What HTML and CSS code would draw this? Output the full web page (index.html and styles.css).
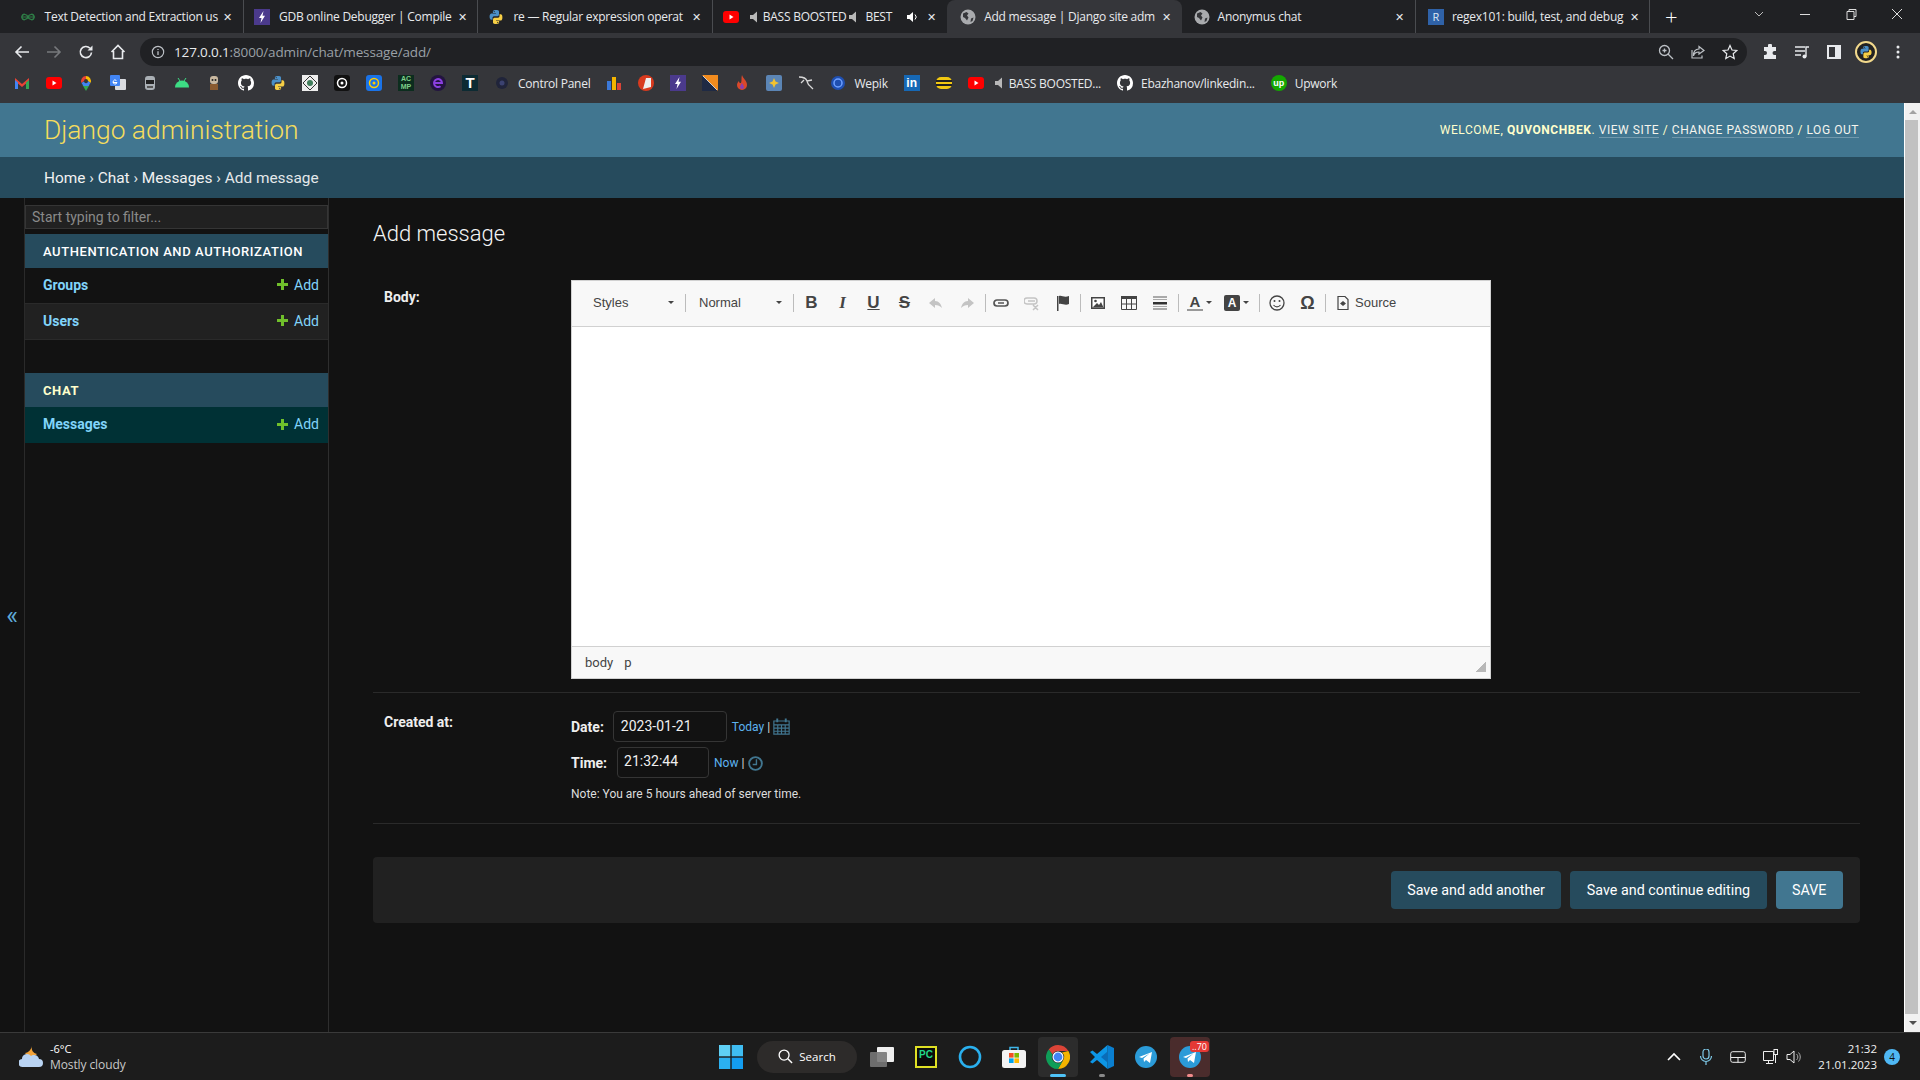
FILE: index.html
```html
<!DOCTYPE html>
<html lang="en">
<head>
<meta charset="utf-8">
<title>Add message | Django site admin</title>
<link rel="stylesheet" href="styles.css">
</head>
<body>
<svg class="defs" xmlns="http://www.w3.org/2000/svg">
  <symbol id="gh" viewBox="0 0 16 16"><path fill="#fff" d="M8 0C3.58 0 0 3.58 0 8c0 3.54 2.29 6.53 5.47 7.59.4.07.55-.17.55-.38 0-.19-.01-.82-.01-1.49-2.01.37-2.53-.49-2.69-.94-.09-.23-.48-.94-.82-1.13-.28-.15-.68-.52-.01-.53.63-.01 1.08.58 1.23.82.72 1.21 1.87.87 2.33.66.07-.52.28-.87.51-1.07-1.78-.2-3.64-.89-3.64-3.95 0-.87.31-1.59.82-2.15-.08-.2-.36-1.02.08-2.12 0 0 .67-.21 2.2.82.64-.18 1.32-.27 2-.27.68 0 1.36.09 2 .27 1.53-1.04 2.2-.82 2.2-.82.44 1.1.16 1.92.08 2.12.51.56.82 1.27.82 2.15 0 3.07-1.87 3.75-3.65 3.95.29.25.54.73.54 1.48 0 1.07-.01 1.93-.01 2.2 0 .21.15.46.55.38A8.013 8.013 0 0016 8c0-4.42-3.58-8-8-8z"/></symbol>
  <symbol id="py" viewBox="0 0 16 16"><path fill="#4a8fc7" d="M7.9 1C4.7 1 4.9 2.4 4.9 2.4v1.5H8v.5H3.7S1.6 4.1 1.6 7.6c0 3.3 1.8 3.1 1.8 3.1h1.1V9.1s-.1-1.8 1.8-1.8h3s1.7 0 1.7-1.7V2.7S11.5 1 7.9 1zM6.2 2a.6.6 0 110 1.2.6.6 0 010-1.2z"/><path fill="#f7cf45" d="M8.1 15c3.2 0 3-1.4 3-1.4v-1.5H8v-.5h4.3s2.1.3 2.1-3.2c0-3.3-1.8-3.1-1.8-3.1h-1.1v1.6s.1 1.8-1.8 1.8h-3s-1.7 0-1.7 1.7v2.9S4.500 15 8.100 15zm1.700-1a.6.6 0 110-1.200.6.6 0 010 1.200z"/></symbol>
  <symbol id="yt" viewBox="0 0 16 16"><rect x="0" y="2" width="16" height="12" rx="3" fill="#f00"/><path fill="#fff" d="M6.500 5.500v5l4-2.500z"/></symbol>
  <symbol id="bolt" viewBox="0 0 16 16"><rect width="16" height="16" fill="#4b3a8c"/><path fill="#fff" d="M9.500 2 5 9h2.500L6.500 14 11 6.800H8.500z"/></symbol>
  <symbol id="globe" viewBox="0 0 16 16"><circle cx="8" cy="8" r="7.500" fill="#a9abae"/><path fill="#35363a" d="M3 4.500 6.500 3l2 1.500L7 6.500l1.500 2-1.500 3-2-2.500-2-1zM11 9.500l2.500-1-1 3.500-2 1z"/></symbol>
  <symbol id="spk" viewBox="0 0 10 14"><path fill="#b8b8b8" d="M1 5h3l4-3.500v11L4 9H1z"/></symbol>
</svg>

<div class="tabstrip">
  <div class="tab">
    <svg class="ico" viewBox="0 0 16 16"><path fill="none" stroke="#2e7d46" stroke-width="1.500" d="M2 8c0-4 5-3 6 0s6 4 6 0-5-3-6 0-6 4-6 0z"/><path stroke="#2e7d46" d="M1 8h14"/></svg>
    <span class="tab-title">Text Detection and Extraction us</span><span class="tab-x">✕</span>
  </div>
  <div class="tab">
    <svg class="ico"><use href="#bolt"/></svg>
    <span class="tab-title">GDB online Debugger | Compile</span><span class="tab-x">✕</span>
  </div>
  <div class="tab">
    <svg class="ico"><use href="#py"/></svg>
    <span class="tab-title">re — Regular expression operat</span><span class="tab-x">✕</span>
  </div>
  <div class="tab tab-yt-wrap">
    <svg class="ico"><use href="#yt"/></svg>
    <svg class="spk"><use href="#spk"/></svg><span class="tab-yt">BASS BOOSTED</span><svg class="spk spk-2"><use href="#spk"/></svg><span class="tab-yt2">BEST</span>
    <svg class="tab-audio" viewBox="0 0 14 14"><path fill="#fff" d="M2 5h2.500L8 2v10L4.500 9H2z"/><path fill="none" stroke="#fff" d="M10 4.500a3.500 3.500 0 010 5"/></svg><span class="tab-x">✕</span>
  </div>
  <div class="tab tab-active">
    <svg class="ico"><use href="#globe"/></svg>
    <span class="tab-title">Add message | Django site adm</span><span class="tab-x">✕</span>
  </div>
  <div class="tab tab-late">
    <svg class="ico"><use href="#globe"/></svg>
    <span class="tab-title">Anonymus chat</span><span class="tab-x">✕</span>
  </div>
  <div class="tab tab-late">
    <span class="ico regex">R</span>
    <span class="tab-title">regex101: build, test, and debug</span><span class="tab-x">✕</span>
  </div>
  <div class="newtab">+</div>
  <div class="winctl">
    <svg class="win" viewBox="0 0 12 12"><path fill="none" stroke="#bbb" d="M2 4l4 4 4-4"/></svg>
    <svg class="win" viewBox="0 0 12 12"><path stroke="#ddd" d="M1 6.500h10"/></svg>
    <svg class="win" viewBox="0 0 12 12"><path fill="none" stroke="#ddd" d="M2 3.500h7v8H2zM4 3.500v-2h7v7H9"/></svg>
    <svg class="win" viewBox="0 0 12 12"><path stroke="#ddd" d="M1 1l10 10M11 1 1 11"/></svg>
  </div>
</div>

<div class="toolbar">
  <svg class="tb-ico tb-first" viewBox="0 0 16 16"><path fill="none" stroke="#e8eaed" stroke-width="1.600" d="M15 8H2M7.500 2.500 2 8l5.500 5.500"/></svg>
  <svg class="tb-ico" viewBox="0 0 16 16"><path fill="none" stroke="#77797c" stroke-width="1.600" d="M1 8h13M8.500 2.500 14 8l-5.500 5.500"/></svg>
  <svg class="tb-ico" viewBox="0 0 16 16"><path fill="none" stroke="#e8eaed" stroke-width="1.600" d="M13.500 8.500a5.600 5.600 0 11-1.500-4.300"/><path fill="#e8eaed" d="M14.500 1.500v5h-5z"/></svg>
  <svg class="tb-ico" viewBox="0 0 16 16"><path fill="none" stroke="#e8eaed" stroke-width="1.600" d="M1.500 8 8 1.500 14.500 8M3.500 7v7.500h9V7"/></svg>
  <div class="omnibox">
    <svg class="om-info" viewBox="0 0 16 16"><circle cx="8" cy="8" r="6.500" fill="none" stroke="#bdc1c6" stroke-width="1.300"/><path stroke="#bdc1c6" stroke-width="1.500" d="M8 7v4.500M8 4.500v1.300"/></svg>
    <span class="url"><span class="url-host">127.0.0.1</span>:8000/admin/chat/message/add/</span>
    <svg class="om-ico om-push" viewBox="0 0 16 16"><circle cx="6.500" cy="6.500" r="5" fill="none" stroke="#bdc1c6" stroke-width="1.300"/><path stroke="#bdc1c6" stroke-width="1.300" d="M10 10l5 5M4.500 6.500h4M6.500 4.500v4"/></svg>
    <svg class="om-ico" viewBox="0 0 16 16"><path fill="none" stroke="#bdc1c6" stroke-width="1.200" d="M9 2.500 14 6.500 9 10V8C5.500 8 4 9.500 3.500 12 3 7.500 5.500 5 9 5zM2 6v8h10v-2.500"/></svg>
    <svg class="om-ico" viewBox="0 0 16 16"><path fill="none" stroke="#e8eaed" stroke-width="1.200" d="M8 1.500l2 4.500 4.800.5-3.600 3.200 1 4.800L8 12.100 3.800 14.500l1-4.800L1.200 6.500 6 6z"/></svg>
  </div>
  <svg class="tb-ico tb-after" viewBox="0 0 16 16"><path fill="#e8eaed" d="M6 1.500a2 2 0 014 0V3h4v4h-1.500a2 2 0 000 4H14v4H2v-4h1a2 2 0 000-4H2V3h4z"/></svg>
  <svg class="tb-ico" viewBox="0 0 16 16"><path stroke="#e8eaed" stroke-width="1.400" fill="none" d="M1 3h10M1 7h10M1 11h6M12 12.500V3h3"/><circle cx="10.500" cy="12.500" r="2" fill="#e8eaed"/></svg>
  <svg class="tb-ico" viewBox="0 0 16 16"><path fill="#e8eaed" fill-rule="evenodd" d="M1 1h14v14H1zM3 3v10h6V3z"/></svg>
  <span class="profile"><svg class="ico"><use href="#py"/></svg></span>
  <svg class="tb-ico" viewBox="0 0 16 16"><circle cx="8" cy="3" r="1.500" fill="#e8eaed"/><circle cx="8" cy="8" r="1.500" fill="#e8eaed"/><circle cx="8" cy="13" r="1.500" fill="#e8eaed"/></svg>
</div>

<div class="bookmarks">
  <span class="bm"><svg class="ico" viewBox="0 0 16 16"><path fill="#ea4335" d="M1 3l7 6 7-6v3L8 12 1 6z"/><path fill="#4285f4" d="M1 5l3 2.500V14H1z"/><path fill="#34a853" d="M15 5l-3 2.500V14h3z"/></svg></span>
  <span class="bm"><svg class="ico"><use href="#yt"/></svg></span>
  <span class="bm"><svg class="ico" viewBox="0 0 16 16"><path fill="#34a853" d="M8 16 4.500 10h7z"/><path fill="#ea4335" d="M3.500 8A5 5 0 018 1v3a2 2 0 00-2 2z"/><path fill="#fbbc04" d="M8 1a5 5 0 014.500 7L10 6a2 2 0 00-2-2z"/><path fill="#4285f4" d="M3.500 8 6 6.500A2 2 0 0010 6l2.500 2-2 3h-5z"/></svg></span>
  <span class="bm"><svg class="ico" viewBox="0 0 16 16"><rect x="5" y="4" width="11" height="11" rx="1" fill="#dadce0"/><rect width="10" height="11" rx="1" fill="#4285f4"/><path stroke="#fff" fill="none" d="M3 7.500h4a2 2 0 11-.6-2"/></svg></span>
  <span class="bm"><svg class="ico" viewBox="0 0 16 16"><rect x="3" y="1" width="10" height="14" rx="3" fill="#aab0b5"/><rect x="4" y="5" width="8" height="4" fill="#222"/><rect x="5" y="11" width="6" height="2" fill="#555"/></svg></span>
  <span class="bm"><svg class="ico" viewBox="0 0 16 16"><path fill="#3ddc84" d="M1 12.500a7 7 0 0114 0z"/><path stroke="#3ddc84" d="M4 3l2 3M12 3l-2 3"/></svg></span>
  <span class="bm"><svg class="ico" viewBox="0 0 16 16"><rect x="4" y="1" width="8" height="8" rx="3" fill="#c9b8a0"/><rect x="4" y="9" width="8" height="6" fill="#8a5a2f"/><circle cx="6.500" cy="5" r="1" fill="#222"/><circle cx="9.500" cy="5" r="1" fill="#222"/></svg></span>
  <span class="bm"><svg class="ico"><use href="#gh"/></svg></span>
  <span class="bm"><svg class="ico"><use href="#py"/></svg></span>
  <span class="bm"><svg class="ico" viewBox="0 0 16 16"><rect width="16" height="16" fill="#eee"/><path fill="none" stroke="#333" d="M8 1l7 7-7 7-7-7z"/><circle cx="8" cy="8" r="3" fill="#3f7d5a"/></svg></span>
  <span class="bm"><svg class="ico" viewBox="0 0 16 16"><rect width="16" height="16" rx="3" fill="#111"/><circle cx="8" cy="8" r="4.500" fill="none" stroke="#fff" stroke-width="1.500"/><circle cx="8" cy="8" r="1.500" fill="#fff"/></svg></span>
  <span class="bm"><svg class="ico" viewBox="0 0 16 16"><rect width="16" height="16" rx="3" fill="#1a73e8"/><circle cx="8" cy="8" r="4.500" fill="none" stroke="#fc0" stroke-width="1.500"/><circle cx="8" cy="8" r="1.500" fill="#fc0"/></svg></span>
  <span class="bm"><span class="ico acmp">AC<br>MP</span></span>
  <span class="bm"><svg class="ico" viewBox="0 0 16 16"><circle cx="8" cy="8" r="8" fill="#231440"/><path fill="none" stroke="#8b3fe0" stroke-width="2" d="M4 8h8a4 4 0 10-1.500 3.200"/></svg></span>
  <span class="bm"><span class="ico tee">T</span></span>
  <span class="bm"><svg class="ico" viewBox="0 0 16 16"><circle cx="8" cy="8" r="6" fill="#20243a"/><circle cx="8" cy="8" r="2.500" fill="#3b4270"/></svg><span class="bm-t">Control Panel</span></span>
  <span class="bm"><svg class="ico" viewBox="0 0 16 16"><rect x="1" y="6" width="4" height="9" fill="#3b78d8"/><rect x="6" y="2" width="4" height="13" fill="#f4b400"/><rect x="11" y="8" width="4" height="7" fill="#db4437"/></svg></span>
  <span class="bm"><svg class="ico" viewBox="0 0 16 16"><circle cx="8" cy="8" r="8" fill="#d93a1e"/><path fill="#eee" d="M5 14 8 3h5v9z"/></svg></span>
  <span class="bm"><svg class="ico"><use href="#bolt"/></svg></span>
  <span class="bm"><svg class="ico" viewBox="0 0 16 16"><rect width="16" height="16" fill="#f28c1e"/><path fill="#1f2a44" d="M0 0l16 16H0z"/><path fill="none" stroke="#ccc" d="M1 1l14 14"/></svg></span>
  <span class="bm"><svg class="ico" viewBox="0 0 16 16"><path fill="#d9482b" d="M8 0c1 4 5 5 5 10a5 5 0 01-10 0c0-2 1-3 2-4 0 2 1 2 2 2 1-3 0-5 1-8z"/><path fill="#8a3fb0" d="M8 8c1 2 2 3 2 4a2 2 0 01-4 0c0-1 1-2 2-4z"/></svg></span>
  <span class="bm"><svg class="ico" viewBox="0 0 16 16"><rect width="16" height="16" rx="2" fill="#5b85b5"/><path fill="#f2c230" d="M8 3l1.500 3.500L13 8l-3.500 1.500L8 13 6.500 9.500 3 8l3.500-1.500z"/></svg></span>
  <span class="bm"><svg class="ico" viewBox="0 0 16 16"><path fill="none" stroke="#d8d8d8" stroke-width="1.300" d="M1 2c4 0 7 1 8 4s1 4 3 5l3 3M9 6l5-1M6 5 3 8"/></svg></span>
  <span class="bm"><svg class="ico" viewBox="0 0 16 16"><circle cx="8" cy="8" r="7" fill="#1f4fb0"/><circle cx="8" cy="8" r="4" fill="none" stroke="#6fa0ff" stroke-width="1.500"/></svg><span class="bm-t">Wepik</span></span>
  <span class="bm"><span class="ico lin">in</span></span>
  <span class="bm"><svg class="ico" viewBox="0 0 16 16"><rect y="2" width="16" height="12" rx="5" fill="#f2c811"/><rect y="5" width="16" height="2" fill="#222"/><rect y="9" width="16" height="2" fill="#222"/></svg></span>
  <span class="bm"><svg class="ico"><use href="#yt"/></svg><svg class="spk spk-bm"><use href="#spk"/></svg><span class="bm-t bm-t-s">BASS BOOSTED...</span></span>
  <span class="bm"><svg class="ico"><use href="#gh"/></svg><span class="bm-t">Ebazhanov/linkedin...</span></span>
  <span class="bm"><span class="ico upw">up</span><span class="bm-t">Upwork</span></span>
</div>

<div class="window">
  <div class="page">
    <header class="dj-header">
      <div class="brand">Django administration</div>
      <div class="user-tools">WELCOME, <strong>QUVONCHBEK</strong>. <a class="ul">VIEW SITE</a> / <a class="ul">CHANGE PASSWORD</a> / <a class="ul">LOG OUT</a></div>
    </header>
    <nav class="crumbs"><a>Home</a> › <a>Chat</a> › <a>Messages</a> › Add message</nav>
    <div class="main">
      <div class="toggle">«</div>
      <aside class="side">
        <div class="filter">Start typing to filter...</div>
        <div class="cap">AUTHENTICATION AND AUTHORIZATION</div>
        <div class="row"><a class="row-name">Groups</a><a class="row-add"><span class="plus"></span>Add</a></div>
        <div class="row row-alt"><a class="row-name">Users</a><a class="row-add"><span class="plus"></span>Add</a></div>
        <div class="cap cap-2">CHAT</div>
        <div class="row row-sel"><a class="row-name">Messages</a><a class="row-add"><span class="plus"></span>Add</a></div>
      </aside>
      <main class="content">
        <h1 class="title">Add message</h1>
        <div class="frow frow-body">
          <label class="flabel">Body:</label>
          <div class="editor">
            <div class="ck-bar">
              <div class="combo"><span>Styles</span><i class="caret"></i></div>
              <i class="sep"></i>
              <div class="combo combo-2"><span>Normal</span><i class="caret"></i></div>
              <i class="sep"></i>
              <span class="btn b-b">B</span><span class="btn b-i">I</span><span class="btn b-u">U</span><span class="btn b-s">S</span>
              <span class="btn"><svg class="ck" viewBox="0 0 16 16"><path fill="#c4c4c4" d="M7 3 1 8l6 5v-3c3 0 5 1 7 3-1-4-3-7-7-7z"/></svg></span>
              <span class="btn"><svg class="ck" viewBox="0 0 16 16"><path fill="#c4c4c4" d="M9 3l6 5-6 5v-3c-3 0-5 1-7 3 1-4 3-7 7-7z"/></svg></span>
              <i class="sep sep-a"></i>
              <span class="btn"><svg class="ck" viewBox="0 0 16 16"><path fill="none" stroke="#555" stroke-width="1.700" d="M6 5H4a3 3 0 000 6h2M10 5h2a3 3 0 010 6h-2M5 8h6M6 5h4M6 11h4"/></svg></span>
              <span class="btn"><svg class="ck" viewBox="0 0 16 16"><path fill="none" stroke="#c4c4c4" stroke-width="1.500" d="M6 3H3a2.500 2.500 0 000 6h7a2.500 2.500 0 000-6H6M4 6h7M9 10l5 5M14 10l-5 5"/></svg></span>
              <span class="btn"><svg class="ck" viewBox="0 0 16 16"><path fill="#444" d="M2 1h1.500v15H2zM4 1c3-1 5 2 10 0v8c-4 2-7-1-10 0z"/></svg></span>
              <i class="sep sep-b"></i>
              <span class="btn"><svg class="ck" viewBox="0 0 16 16"><rect x="1" y="2" width="14" height="12" fill="#444"/><rect x="2.500" y="3.500" width="11" height="9" fill="#fff"/><circle cx="5.500" cy="6" r="1.300" fill="#444"/><path fill="#444" d="M2.500 12.500 7 8l2 2 2-3 2.500 5.500z"/></svg></span>
              <span class="btn"><svg class="ck" viewBox="0 0 16 16"><path fill="#444" d="M0 1h16v3H0z"/><path fill="none" stroke="#444" d="M.500 4v10.500h15V4M5.500 4v10.500M10.500 4v10.500M.500 9h15"/></svg></span>
              <span class="btn"><svg class="ck" viewBox="0 0 16 16"><path fill="#aaa" d="M1 1h14v2H1zM1 4h14v1H1zM1 11h14v1H1zM1 13h14v2H1z"/><path fill="#333" d="M1 7h14v2.500H1z"/></svg></span>
              <i class="sep sep-c"></i>
              <span class="btn btn-drop"><span class="b-a">A</span><i class="caret caret-s"></i></span>
              <span class="btn btn-drop"><span class="b-ab">A</span><i class="caret caret-s"></i></span>
              <i class="sep sep-d"></i>
              <span class="btn"><svg class="ck" viewBox="0 0 16 16"><circle cx="8" cy="8" r="7" fill="none" stroke="#444" stroke-width="1.300"/><circle cx="5.500" cy="6" r="1" fill="#444"/><circle cx="10.500" cy="6" r="1" fill="#444"/><path fill="none" stroke="#444" stroke-width="1.200" d="M4.500 10c2 2.500 5 2.500 7 0"/></svg></span>
              <span class="btn b-om">Ω</span>
              <i class="sep sep-e"></i>
              <svg class="ck ck-src" viewBox="0 0 16 16"><path fill="none" stroke="#444" stroke-width="1.200" d="M3 1.500h7l3 3v10H3z"/><path fill="#444" d="M8 6l3 2.500L8 11 5 8.500z"/></svg>
              <span class="src-t">Source</span>
            </div>
            <div class="ck-area"></div>
            <div class="ck-status"><span>body</span><span>p</span><i class="grip"></i></div>
          </div>
        </div>
        <div class="frow frow-date">
          <label class="flabel flabel-d">Created at:</label>
          <div class="dt">
            <div class="dt-line"><b class="dt-l">Date:</b><span class="inp inp-d">2023-01-21</span><a class="lnk">Today</a><span class="bar">|</span>
              <svg class="cal" viewBox="0 0 16 16"><path fill="none" stroke="#417690" stroke-width="1.100" d="M.800 2.800h14.400v12.400H.800zM.800 6.500h14.400M.800 9.500h14.400M.800 12.500h14.400M4.500 6.500v8.700M8 6.500v8.700M11.500 6.500v8.700"/><path stroke="#417690" stroke-width="1.800" d="M4 .5v3.500M12 .5v3.500"/></svg></div>
            <div class="dt-line dt-line-2"><b class="dt-l">Time:</b><span class="inp inp-t">21:32:44</span><a class="lnk">Now</a><span class="bar">|</span>
              <svg class="clk" viewBox="0 0 16 16"><circle cx="8" cy="8" r="6.800" fill="none" stroke="#417690" stroke-width="2"/><path fill="none" stroke="#417690" stroke-width="1.500" d="M9 3.500V9H5"/></svg></div>
            <p class="note">Note: You are 5 hours ahead of server time.</p>
          </div>
        </div>
        <div class="actions">
          <span class="act">Save and add another</span>
          <span class="act">Save and continue editing</span>
          <span class="act act-main">SAVE</span>
        </div>
      </main>
    </div>
  </div>
  <div class="scroll">
    <i class="sc-up"></i>
    <div class="sc-thumb"></div>
    <i class="sc-down"></i>
  </div>
</div>

<footer class="taskbar">
  <div class="weather">
    <svg class="wx" viewBox="0 0 24 24"><path fill="#f2a33a" d="M13 1c-1 4 1 7 5 8-3 3-9 3-12-1 3 0 6-3 7-7z"/><path fill="#b9d3f2" d="M4 22a4 4 0 01-1-8 5 5 0 019-3 5 5 0 018 3 4 4 0 010 8z"/></svg>
    <div class="wx-t"><div class="wx-1">-6°C</div><div class="wx-2">Mostly cloudy</div></div>
  </div>
  <div class="cell cell-start"><svg class="ti" viewBox="0 0 24 24"><rect width="11.300" height="11.300" fill="#5fd0f5"/><rect x="12.700" width="11.300" height="11.300" fill="#3fbdf2"/><rect y="12.700" width="11.300" height="11.300" fill="#2bb0f0"/><rect x="12.700" y="12.700" width="11.300" height="11.300" fill="#139df0"/></svg></div>
  <div class="search"><svg class="s-ico" viewBox="0 0 16 16"><circle cx="6.500" cy="6.500" r="5.300" fill="none" stroke="#fff" stroke-width="1.400"/><path stroke="#fff" stroke-width="1.600" d="M10.500 10.500 15 15"/></svg><span>Search</span></div>
  <div class="cell"><svg class="ti" viewBox="0 0 24 24"><rect x="7" y="2" width="17" height="15" rx="1" fill="#efefef"/><rect y="7" width="17" height="15" rx="1" fill="#777" opacity=".9"/></svg></div>
  <div class="cell"><span class="pc">PC</span></div>
  <div class="cell"><svg class="ti" viewBox="0 0 24 24"><circle cx="12" cy="12" r="10" fill="none" stroke="#2ab0ee" stroke-width="2.600"/></svg></div>
  <div class="cell"><svg class="ti" viewBox="0 0 24 24"><path fill="none" stroke="#3fb7ea" stroke-width="1.500" d="M8 6V2.500h8V6"/><rect y="5" width="24" height="18" rx="2.500" fill="#f3f3f3"/><rect x="7" y="8" width="4.600" height="4.600" fill="#f25022"/><rect x="12.400" y="8" width="4.600" height="4.600" fill="#7fba00"/><rect x="7" y="13.400" width="4.600" height="4.600" fill="#00a4ef"/><rect x="12.400" y="13.400" width="4.600" height="4.600" fill="#ffb900"/></svg></div>
  <div class="cell cell-on"><svg class="ti" viewBox="0 0 24 24"><path fill="#db4437" d="M12 0a12 12 0 0110.400 6H12a6 6 0 00-5.500 3.500L2.700 4.500A12 12 0 0112 0z"/><path fill="#f4b400" d="M22.400 6A12 12 0 0112 24l5.200-9A6 6 0 0016 7.500z" /><path fill="#0f9d58" d="M2.700 4.500A12 12 0 0012 24l5.200-9a6 6 0 01-10.700-5.500z"/><circle cx="12" cy="12" r="5.500" fill="#fff"/><circle cx="12" cy="12" r="4.400" fill="#4285f4"/></svg><i class="run run-blue"></i></div>
  <div class="cell"><svg class="ti" viewBox="0 0 24 24"><path fill="#0a7fd0" d="M17.500 0 24 3v18l-6.500 3z"/><path fill="#0d96e6" d="M17.500 0v24L7 15l-4.500 3.500L0 17l5-5-5-5 2.500-1.500L7 9z"/><path fill="#0a6cb8" d="M17.500 6.500 11 12l6.500 5.500z"/></svg><i class="run"></i></div>
  <div class="cell"><svg class="ti" viewBox="0 0 24 24"><circle cx="12" cy="12" r="11" fill="#2b9bd8"/><path fill="#fff" d="M5 12l13-5-2 11-4-3-2 2-.5-3.500 6-5-7.500 4.500z"/></svg></div>
  <div class="cell cell-red"><svg class="ti" viewBox="0 0 24 24"><circle cx="12" cy="12" r="11" fill="#2b9bd8"/><path fill="#fff" d="M5 12l13-5-2 11-4-3-2 2-.5-3.500 6-5-7.500 4.500z"/></svg><span class="tg-b">..70</span><i class="run run-red"></i></div>
  <div class="tray">
    <div class="tc tc-1"><svg class="tr" viewBox="0 0 16 16"><path fill="none" stroke="#fff" stroke-width="1.600" d="M2 11l6-6 6 6"/></svg></div>
    <div class="tc tc-1"><svg class="tr" viewBox="0 0 16 16"><rect x="5" y="0" width="6" height="10" rx="3" fill="none" stroke="#7ec9e8" stroke-width="1.200"/><path fill="none" stroke="#7ec9e8" stroke-width="1.200" d="M2.500 7a5.500 5.500 0 0011 0M8 12.500V16"/></svg></div>
    <div class="tc tc-1"><svg class="tr" viewBox="0 0 16 16"><rect x=".7" y="2.700" width="14.600" height="10.600" rx="2" fill="none" stroke="#eee"/><path stroke="#eee" d="M1 8.500h14M8 8.500v5"/></svg></div>
    <div class="tc tc-2"><svg class="tr" viewBox="0 0 16 16"><path fill="none" stroke="#eee" d="M.5 2.500h10v9H.5zM5.500 11.500v3M3 14.500h7M12.500 6v8"/><rect x="11" y=".5" width="3.500" height="5" fill="#1c1c1c" stroke="#eee"/></svg></div>
    <div class="tc tc-3"><svg class="tr" viewBox="0 0 16 16"><path fill="none" stroke="#eee" d="M1 5.500h3L8 2v12l-4-3.500H1z"/><path fill="none" stroke="#aaa" d="M10.500 5a4 4 0 010 6M12.500 3.500a6.500 6.500 0 010 9"/></svg></div>
    <div class="clock"><div>21:32</div><div>21.01.2023</div></div>
    <span class="badge">4</span>
  </div>
</footer>
</body>
</html>
```
FILE: styles.css
```css
* { box-sizing: border-box; }
html, body { margin: 0; padding: 0; }
body { width: 1920px; height: 1080px; overflow: hidden; display: flex; flex-direction: column; background: #121212; font-family: Roboto, "Noto Sans", sans-serif; color: #eee; }
.defs { display: none; }
.ico { width: 16px; height: 16px; flex: none; display: block; }

/* tab strip */
.tabstrip { height: 33px; flex: none; background: #202124; display: flex; padding-left: 9.6px; font-family: "Open Sans", "Noto Sans", sans-serif; font-size: 12px; color: #e8eaed; }
.tab { width: 234.4px; height: 33px; flex: none; display: flex; align-items: center; padding: 0 9px 0 10px; position: relative; border-right: 1px solid #4a4c50; }
.tab-yt-wrap { border-right-color: transparent; }
.tab-active { background: #35363a; border-radius: 8px 8px 0 0; border-right: none; padding-left: 13px; }
.tab-late { padding-left: 12px; }
.tab-title { flex: 1; min-width: 0; margin-left: 9px; white-space: nowrap; letter-spacing: -.25px; }
.tab-late .tab-title, .tab-active .tab-title { margin-left: 8px; }
.tab-x { width: 12px; font-size: 11px; line-height: 12px; text-align: center; margin-left: 6px; flex: none; }
.spk { width: 10px; height: 14px; flex: none; margin-left: 10px; display: block; }
.tab-yt { flex: none; margin-left: 4px; letter-spacing: -.25px; white-space: nowrap; }
.spk-2 { margin-left: 2px; }
.tab-yt2 { flex: 1; margin-left: 7px; letter-spacing: -.25px; }
.tab-audio { width: 14px; height: 14px; flex: none; }
.regex { background: #2f62a8; color: #dfe8f5; font-size: 11px; line-height: 16px; text-align: center; }
.newtab { width: 30px; text-align: center; font-size: 22px; line-height: 33px; color: #fff; margin-left: 6px; font-weight: 300; }
.winctl { margin-left: auto; display: flex; height: 28px; align-items: center; }
.win { width: 12px; height: 12px; margin-left: 34px; flex: none; }
.winctl .win:last-child { margin-right: 17px; }

/* toolbar */
.toolbar { height: 33px; flex: none; background: #35363a; display: flex; align-items: center; padding-top: 5px; }
.tb-ico { width: 16px; height: 16px; flex: none; margin-right: 16px; display: block; }
.tb-first { margin-left: 14px; }
.omnibox { width: 1607px; height: 28px; flex: none; margin-left: -2px; margin-right: 15px; background: #202124; border-radius: 14px; display: flex; align-items: center; padding-left: 11px; padding-right: 9px; font-family: "Open Sans", "Noto Sans", sans-serif; }
.om-info { width: 14px; height: 14px; flex: none; }
.url { color: #9aa0a6; margin-left: 9px; white-space: nowrap; letter-spacing: -.15px; font-size: 13.500px; }
.url-host { color: #e8eaed; }
.om-ico { width: 16px; height: 16px; margin-left: 16px; flex: none; }
.om-push { margin-left: auto; }
.tb-after { margin-left: 0; }
.profile { width: 22px; height: 22px; flex: none; border-radius: 50%; border: 2px solid #f2d98c; background: #222; display: flex; align-items: center; justify-content: center; margin: 0 13px 0 -3px; }
.profile .ico { width: 14px; height: 14px; }

/* bookmarks */
.bookmarks { height: 37px; flex: none; background: #35363a; display: flex; align-items: center; padding: 0 0 3px 6px; font-family: "Open Sans", "Noto Sans", sans-serif; font-size: 12px; color: #e8eaed; }
.bm { display: flex; align-items: center; padding: 0 8px; flex: none; white-space: nowrap; }
.bm-t { margin-left: 8px; letter-spacing: -.25px; }
.bm-t-s { margin-left: 5px; }
.spk-bm { margin-left: 10px; }
.acmp { background: #0c2d1e; color: #7fd08a; font: 700 7px/8px "Liberation Sans", sans-serif; text-align: center; }
.tee { background: #0d2b33; color: #fff; font: 700 15px/16px "Liberation Sans", sans-serif; text-align: center; }
.lin { background: #1668b5; color: #fff; font: 700 12px/16px "Liberation Sans", sans-serif; text-align: center; }
.upw { background: #14a800; color: #fff; font: 700 9px/16px "Liberation Sans", sans-serif; text-align: center; border-radius: 50%; }

/* page */
.window { flex: 1; display: flex; min-height: 0; }
.page { flex: 1; min-width: 0; display: flex; flex-direction: column; background: #121212; }
.dj-header { height: 54px; flex: none; background: #417690; display: flex; align-items: center; justify-content: space-between; padding: 0 45px 0 44px; }
.brand { color: #f5dd5d; font-size: 26.400px; font-weight: 300; white-space: nowrap; }
.user-tools { color: #ffc; font-size: 12px; letter-spacing: .55px; white-space: nowrap; font-weight: 400; }
.user-tools strong { font-weight: 700; }
.ul { border-bottom: 1px solid rgba(255,255,255,.25); color: #f5f5ee; font-weight: 400; }
.crumbs { height: 41px; flex: none; background: #264b5d; padding: 1px 44px 0; font-size: 15.400px; line-height: 41px; color: #e3e8ea; white-space: nowrap; }
.crumbs a { color: #f2f2f2; }
.main { flex: 1; display: flex; min-height: 0; }
.toggle { width: 25px; flex: none; display: flex; align-items: center; justify-content: center; color: #5fa9d8; font-size: 25px; border-right: 1px solid #2a2a2a; }
.side { width: 304px; flex: none; border-right: 1px solid #2e2e2e; padding-top: 7px; }
.filter { height: 24px; border: 1px solid #353535; background: #212121; color: #8a8a8a; font-size: 14px; line-height: 22px; padding-left: 6px; margin-bottom: 5px; }
.cap { height: 34px; background: #264b5d; color: #fff; font-size: 13px; font-weight: 500; letter-spacing: .58px; line-height: 35px; padding-left: 18px; white-space: nowrap; }
.cap-2 { margin-top: 33px; color: #ffc; font-weight: 700; line-height: 36px; }
.row { height: 36px; display: flex; align-items: center; justify-content: space-between; padding: 0 9px 2px 18px; font-size: 14px; border-bottom: 1px solid #2a2a2a; background: #121212; }
.row-alt { height: 36px; background: #212121; }
.row-sel { background: #003135; border-bottom: none; }
.row-name { color: #81d4fa; font-weight: 700; }
.row-add { color: #81d4fa; display: flex; align-items: center; font-size: 14px; }
.plus { width: 11px; height: 11px; margin-right: 6px; flex: none; background: linear-gradient(#70bf2b,#70bf2b) center/3px 100% no-repeat, linear-gradient(#70bf2b,#70bf2b) center/100% 3px no-repeat; }

.content { flex: 1; min-width: 0; padding: 0 44px; }
.title { margin: 0; padding-top: 23px; font-size: 22px; font-weight: 300; line-height: 26px; color: #f5f5f5; height: 82px; }
.frow { display: flex; border-bottom: 1px solid #2a2a2a; padding-left: 11px; }
.frow-body { height: 413px; }
.flabel { width: 187px; flex: none; font-size: 14px; font-weight: 700; color: #eee; padding-top: 9px; }
.flabel-d { padding-top: 21px; }
.editor { width: 920px; height: 399px; border: 1px solid #d1d1d1; background: #fff; display: flex; flex-direction: column; color: #333; font-family: "Liberation Sans", Arial, sans-serif; }
.ck-bar { height: 46px; flex: none; background: #f8f8f8; border-bottom: 1px solid #d1d1d1; display: flex; align-items: center; padding: 0 0 2px 21px; font-size: 13px; color: #444; }
.combo { width: 92px; display: flex; align-items: center; flex: none; }
.combo-2 { width: 94px; margin-left: 13px; }
.combo span { flex: 1; }
.caret { width: 0; height: 0; border: 3px solid transparent; border-top-color: #444; border-bottom: 0; flex: none; margin-right: 11px; }
.caret-s { margin: 0 0 0 3px; }
.sep { width: 1px; height: 18px; background: #bcbcbc; flex: none; }
.sep-a { margin: 0 -1px 0 3px; }
.sep-b { margin: 0 1px 0 2px; }
.sep-c { margin: 0 0 0 3px; }
.sep-d { margin: 0 1px 0 6px; }
.sep-e { margin: 0 0 0 2px; }
.btn { width: 31px; height: 18px; flex: none; display: flex; align-items: center; justify-content: center; font-family: "Liberation Sans", Arial, sans-serif; font-size: 17px; color: #444; line-height: 18px; }
.sep + .btn.b-b { margin-left: 2px; }
.b-b { font-weight: 700; }
.b-i { font-style: italic; font-weight: 700; font-family: "Liberation Serif", serif; }
.b-u { text-decoration: underline; font-weight: 700; }
.b-s { text-decoration: line-through; font-weight: 700; }
.b-om { font-size: 18px; font-weight: 700; }
.ck { width: 16px; height: 16px; display: block; flex: none; }
.btn-drop { width: 37px; justify-content: flex-start; padding-left: 8px; }
.b-a { font-weight: 700; font-size: 15px; border-bottom: 2px solid #999; line-height: 15px; width: 16px; text-align: center; flex: none; }
.b-ab { font-weight: 700; font-size: 12px; background: #444; color: #fff; width: 16px; height: 16px; text-align: center; line-height: 16px; border-radius: 2px; flex: none; }
.ck-src { margin-left: 9px; }
.src-t { margin-left: 4px; font-size: 13px; }
.ck-area { flex: 1; background: #fff; }
.ck-status { height: 32px; flex: none; background: #f8f8f8; border-top: 1px solid #d1d1d1; display: flex; align-items: center; padding-left: 13px; gap: 11px; font-size: 13px; color: #444; position: relative; font-family: Roboto, sans-serif; }
.grip { position: absolute; right: 4px; bottom: 6px; width: 11px; height: 11px; background: linear-gradient(135deg, transparent 50%, #b8b8b8 50%); }
.frow-date { height: 131px; }
.dt { padding-top: 18px; flex: 1; font-size: 12px; }
.dt-line { display: flex; align-items: center; height: 31px; }
.dt-line-2 { margin-top: 5px; height: 31px; }
.dt-l { font-size: 14px; color: #eee; font-weight: 700; }
.inp { display: block; height: 100%; border: 1px solid #353535; border-radius: 4px; background: #121212; color: #f0f0f0; font-size: 14px; line-height: 29px; padding-left: 7px; margin-left: 9px; }
.inp-d { width: 114px; }
.inp-t { width: 92px; margin-left: 10px; padding-left: 6px; line-height: 27px; }
.lnk { color: #5db3f0; margin-left: 5px; }
.bar { color: #ddd; margin-left: 3px; }
.cal { width: 17px; height: 17px; margin-left: 3px; flex: none; }
.clk { width: 15px; height: 15px; margin-left: 4px; flex: none; position: relative; top: 1px; }
.note { margin: 9px 0 0; font-size: 12px; line-height: 15px; color: #ddd; }
.actions { height: 66px; margin-top: 33px; background: #212121; border-radius: 4px; display: flex; justify-content: flex-end; align-items: center; gap: 9px; padding-right: 17px; }
.act { height: 38px; border-radius: 4px; background: #264b5d; color: #fff; font-size: 14.300px; line-height: 38px; padding: 0 16.500px; white-space: nowrap; }
.act-main { background: #417690; }

/* scrollbar */
.scroll { width: 16px; flex: none; background: #f1f1f1; border-left: 1px solid #fff; display: flex; flex-direction: column; align-items: center; }
.sc-up { width: 0; height: 0; border: 4px solid transparent; border-bottom-color: #a3a3a3; border-top: 0; margin-top: 7px; margin-bottom: 6px; flex: none; }
.sc-down { width: 0; height: 0; border: 4px solid transparent; border-top-color: #505050; border-bottom: 0; margin-top: 7px; margin-bottom: 7px; flex: none; }
.sc-thumb { flex: 1; width: 13px; background: #c1c1c1; align-self: flex-start; }

/* taskbar */
.taskbar { height: 48px; flex: none; background: #1c1c1c; border-top: 1px solid #3a3a3a; display: flex; align-items: center; font-family: "Open Sans", "Noto Sans", sans-serif; color: #fff; }
.weather { width: 711px; flex: none; display: flex; align-items: center; padding-left: 19px; }
.wx { width: 24px; height: 24px; flex: none; }
.wx-t { margin-left: 7px; font-size: 11px; line-height: 15px; position: relative; top: -1px; }
.wx-2 { color: #c8c8c8; font-size: 12px; letter-spacing: -.1px; position: relative; top: 1px; }
.cell { width: 44px; height: 40px; flex: none; display: flex; align-items: center; justify-content: center; position: relative; }
.cell-start { width: 40px; }
.ti { width: 24px; height: 24px; flex: none; }
.search { width: 100px; height: 32px; border-radius: 16px; background: #2d2b2a; display: flex; align-items: center; justify-content: center; gap: 6px; font-size: 11.500px; margin: 0 3px 0 6px; flex: none; }
.s-ico { width: 15px; height: 15px; flex: none; }
.cell-on { background: #2c2c2c; border-radius: 4px; width: 40px; margin: 0 2px; }
.cell-red { background: #4a2c2c; border-radius: 4px; width: 40px; margin: 0 2px; }
.pc { width: 22px; height: 22px; background: #0b0b0b; border: 2px solid #dfe024; color: #21d789; font: 700 10px/14px "Liberation Sans", sans-serif; text-align: center; }
.run { position: absolute; bottom: 0; left: 50%; margin-left: -3px; width: 6px; height: 3px; background: #8a8a8a; border-radius: 2px; }
.run-blue { width: 16px; margin-left: -8px; background: #4fc3f7; }
.run-red { background: #f28b8b; }
.tg-b { position: absolute; top: 4px; right: 1px; background: #e53935; color: #fff; font-size: 9px; line-height: 11px; padding: 0 2px; border-radius: 3px; }
.tray { margin-left: auto; display: flex; align-items: center; padding-right: 20px; }
.tc { display: flex; align-items: center; justify-content: center; flex: none; }
.tc-1 { width: 32px; }
.tc-2 { width: 30px; padding-left: 3px; }
.tc-3 { width: 22px; padding-right: 2px; }
.tr { width: 16px; height: 16px; flex: none; }
.clock { width: 71px; text-align: right; font-size: 11.500px; line-height: 16px; color: #f0f0f0; white-space: nowrap; }
.badge { width: 16px; height: 16px; border-radius: 50%; background: #4fb8f5; color: #111; font-size: 10px; line-height: 16px; text-align: center; margin-left: 7px; flex: none; }
```
